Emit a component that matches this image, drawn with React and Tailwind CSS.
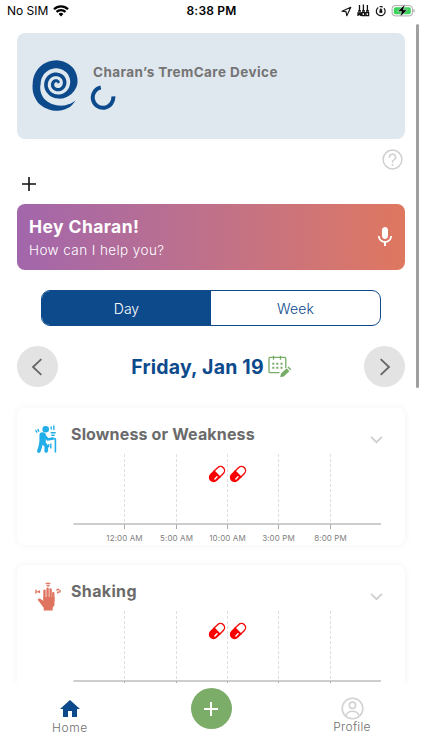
import { MdMic, MdHome } from 'react-icons/md'

// ── Data ────────────────────────────────────────────────────────

const TICKS = [
  { x: 107.5, label: '12:00 AM' },
  { x: 159.5, label: '5:00 AM' },
  { x: 210.5, label: '10:00 AM' },
  { x: 261.5, label: '3:00 PM' },
  { x: 313.5, label: '8:00 PM' },
]

// angle (deg), radius and band width of the logo spiral, tail first
const SPIRAL = [
  [41, 75, 0], [60, 75, 9], [90, 72, 17], [135, 68, 22], [180, 60, 24], [225, 60, 24],
  [270, 59, 24], [315, 57, 24], [360, 51, 22], [405, 43, 15], [450, 37, 12], [495, 34, 11],
  [540, 32, 11], [585, 30.5, 11], [630, 29, 11], [675, 27, 11], [720, 23.5, 11], [765, 20, 10],
  [810, 16.5, 10], [855, 14, 10], [900, 12, 10], [945, 11, 9.5], [990, 10, 9], [1035, 8, 8],
  [1060, 6, 7],
]

function spiralPath() {
  const outer = []
  const inner = []
  for (let i = 0; i < SPIRAL.length - 1; i++) {
    const [a0, r0, w0] = SPIRAL[i]
    const [a1, r1, w1] = SPIRAL[i + 1]
    for (let s = 0; s < 8; s++) {
      const t = s / 8
      const a = ((a0 + (a1 - a0) * t) * Math.PI) / 180
      const r = r0 + (r1 - r0) * t
      const w = (w0 + (w1 - w0) * t) / 2
      outer.push(`${(140 + Math.cos(a) * (r + w)).toFixed(1)} ${(168 + Math.sin(a) * (r + w)).toFixed(1)}`)
      inner.unshift(`${(140 + Math.cos(a) * (r - w)).toFixed(1)} ${(168 + Math.sin(a) * (r - w)).toFixed(1)}`)
    }
  }
  return `M${[...outer, ...inner].join('L')}Z`
}

// ── Icons ───────────────────────────────────────────────────────

function SpiralLogo() {
  return (
    <svg className="w-[46px] h-[52px] shrink-0" viewBox="67 96 136 156">
      <path d={spiralPath()} fill="#0d4a8c" />
    </svg>
  )
}

function WifiIcon() {
  return (
    <svg className="w-[16px] h-[12px]" viewBox="0 0 16 12" fill="none" stroke="#000" strokeWidth="2.2">
      <path d="M1 4.2a10 10 0 0 1 14 0M3.5 6.9a6.4 6.4 0 0 1 9 0" />
      <path d="M5.6 9a3.5 3.5 0 0 1 4.8 0L8 11.5z" fill="#000" stroke="none" />
    </svg>
  )
}

function StatusIcons() {
  return (
    <svg className="w-[76px] h-[16px]" viewBox="340 3 76 16" fill="none" stroke="#111">
      <path d="M342 11.2l8.8-4-4 8.6-.8-4.2z" strokeWidth="1.1" strokeLinejoin="round" />
      <path d="M359.5 5v6M363.4 4.5v6.5M367.4 5v6" strokeWidth="1.3" />
      <path d="M358 11h3M362 11h3M366 11h3M358 16v-3h2.8v3M358 14.5h2.8M362 12.7h2.6v3h-2.6zM366 12.7h2.6v3H366z" strokeWidth="1.3" />
      <path d="M378.3 7.6a4.4 4.4 0 1 0 5.6.6M379.6 6.8a4.4 4.4 0 0 1 3.2.2" strokeWidth="1.2" />
      <path d="M379.8 10.6h2.2v2h-2.2zM380.1 10.2v-.6a.8.8 0 0 1 1.6 0v.6" strokeWidth=".8" fill="#111" />
      <rect x="392.1" y="5.6" width="20.3" height="10.3" rx="3" stroke="#aaa" />
      <rect x="393.8" y="7.2" width="17" height="7.1" rx="1.7" fill="#3bd35b" stroke="none" />
      <path d="M414 9.2v3" stroke="#aaa" strokeWidth="1.2" />
      <path d="M405 4.2l-7.4 7.2h4l-1.6 5.6 7.4-7.2h-4z" fill="#000" stroke="#fff" strokeWidth=".5" />
    </svg>
  )
}

function HelpIcon() {
  return (
    <svg className="w-[21px] h-[21px]" viewBox="0 0 21 21" fill="none" stroke="#d0d0d0" strokeWidth="1.5">
      <circle cx="10.5" cy="10.5" r="9.4" />
      <path d="M7.4 8.3a3.1 3.1 0 1 1 4.6 2.6c-1 .6-1.5 1.1-1.5 2.3" strokeLinecap="round" />
      <circle cx="10.5" cy="15.9" r="1" fill="#d0d0d0" stroke="none" />
    </svg>
  )
}

function CalendarIcon() {
  return (
    <svg className="w-[25px] h-[24px]" viewBox="267 355 25 24" fill="none" stroke="#78ad68" strokeWidth="1.3">
      <path d="M285.8 368v-9.6a1 1 0 0 0-1-1H270a1 1 0 0 0-1 1v13.3a1 1 0 0 0 1 1h9.5M273.5 355.7v4M280.5 355.7v4" />
      <path d="M272.3 363.7h2M276.3 363.7h2M280.5 363.7h2M272.3 367.8h2M276.3 367.8h2M280.5 367.8h2" strokeWidth="2" />
      <path d="M280.2 377.2l.8-3.8 5.6-5.1 2.8 2.9-5.7 5.3zM287.5 367.4l1-1 2.8 2.9-1 1z" fill="#78ad68" stroke="none" />
    </svg>
  )
}

function WalkerIcon() {
  return (
    <svg className="w-[24px] h-[29px]" viewBox="35 425 24 29" fill="none" stroke="#22aee8" strokeLinecap="round" strokeLinejoin="round">
      <circle cx="46.7" cy="429.2" r="3.3" fill="#22aee8" stroke="none" />
      <path d="M43.6 435.4v5.2" strokeWidth="6.4" />
      <path d="M45.5 435.5l3.1 3.9 5-1" strokeWidth="2.6" />
      <path d="M42.2 442l-1 5-1.3 4M44 442l3.4 4.1-.2 4.9" strokeWidth="3.7" />
      <path d="M52.8 438.7h2.8a.8.8 0 0 1 .8.8v13" strokeWidth="1.6" strokeLinecap="butt" />
      <path d="M36.8 430.5l1 1.6M39 429.5l.7 1.8M52.2 427v2M54.8 426v3.6M52.2 432.8h4M52.8 435.3h2.4M49.7 444.8v2M51.8 444v4" strokeWidth="1.4" />
    </svg>
  )
}

function HandIcon() {
  return (
    <svg className="w-[28px] h-[29px]" viewBox="33 581 28 29" fill="none" stroke="#df7560" strokeLinecap="round">
      <path d="M43.5 598v-8.2M46.6 597v-9.4M49.6 597v-8.6M52.3 599v-6.8" strokeWidth="2.4" />
      <path d="M42.4 596h11.1v6.8c0 1.8-.8 2.8-1.8 4v2.7h-9v-2.7c-1.5-1.4-3.4-5.2-5.2-6.8-1.5-1.3 0-3.1 1.7-2.2l3.2 2z" fill="#df7560" stroke="none" />
      <path d="M35 589.3v2.6M38.4 590v1.6M36.8 590.7h1M45.3 582.5h3.4M46.2 584.7h1.8M55.9 589l1.8-.8M56.6 591.8l.8-.8M59.2 589.6l-.5 1.4" strokeWidth="1.5" />
    </svg>
  )
}

function Pill() {
  return (
    <svg className="w-[18px] h-[18px]" viewBox="0 0 18 18">
      <g transform="rotate(45 9 9)">
        <path d="M4.9 9V4.1a4.1 4.1 0 0 1 8.2 0V9z" fill="#fff" stroke="#f30d0d" strokeWidth="1.4" />
        <path d="M4.2 8.7h9.6v5.1a4.8 4.8 0 0 1-9.6 0z" fill="#fb0000" />
        <path d="M11 11v3" stroke="#fff" strokeWidth="1.5" strokeLinecap="round" />
      </g>
    </svg>
  )
}

function ProfileIcon() {
  return (
    <svg className="w-[23px] h-[23px]" viewBox="0 0 23 23" fill="none" stroke="#d2d2d2" strokeWidth="1.6">
      <circle cx="11.5" cy="11.5" r="10.3" />
      <circle cx="11.5" cy="8.3" r="3.2" />
      <path d="M4.8 19.2c.8-3.3 3.4-5 6.7-5s5.9 1.7 6.7 5" />
    </svg>
  )
}

function Chevron({ dir, size, color, width }) {
  const d = { left: 'M16 2.5L6 12l10 9.5', right: 'M8 2.5L18 12 8 21.5', down: 'M2 7l10 10L22 7' }[dir]
  return (
    <svg width={size} height={size} viewBox="0 0 24 24" fill="none" stroke={color} strokeWidth={width}>
      <path d={d} />
    </svg>
  )
}

// ── Symptom card ────────────────────────────────────────────────

function SymptomCard({ title, icon, titleClass, showLabels }) {
  return (
    <div className="h-[137px] shrink-0 rounded-lg bg-white shadow-[0_0_8px_rgba(0,0,0,0.05)] overflow-hidden">
      <div className="flex h-[46px] pl-[17px] pr-[22px]">
        <div className="w-[37px] pt-[17px]">{icon}</div>
        <h2 className={`flex-1 pt-[15px] text-[16px] leading-[22px] font-bold text-[#6b6b6b] ${titleClass}`}>{title}</h2>
        <div className="pt-[25px]">
          <Chevron dir="down" size={13} color="#cfcfcf" width={3.2} />
        </div>
      </div>
      <div className="grid">
        <svg className="col-start-1 row-start-1 w-[388px] h-[91px]" viewBox="0 0 388 91">
          {TICKS.map((t) => (
            <g key={t.label}>
              <line x1={t.x} x2={t.x} y1="0" y2="69" stroke="#dedede" strokeDasharray="3 2" />
              <line x1={t.x} x2={t.x} y1="70" y2="75" stroke="#aaa" />
              {showLabels && (
                <text x={t.x} y="86.5" textAnchor="middle" fontSize="8" fill="#808080" letterSpacing="0.1">{t.label}</text>
              )}
            </g>
          ))}
          <line x1="56.5" x2="364" y1="70" y2="70" stroke="#bdbdbd" strokeWidth="1.5" />
        </svg>
        <div className="col-start-1 row-start-1 flex gap-[2.5px] pl-[191px] pt-[11px]">
          <Pill />
          <Pill />
        </div>
      </div>
    </div>
  )
}

// ── Main component ──────────────────────────────────────────────

export default function App() {
  return (
    <div className="relative flex h-[750px] w-[422px] flex-col overflow-hidden bg-white font-['Inter',sans-serif]">
      {/* Status bar */}
      <div className="flex h-[22px] shrink-0 items-center justify-between pl-[7px] pr-[6px] text-[12px] text-black">
        <div className="flex w-[140px] items-center gap-[5px]">
          <span>No SIM</span>
          <WifiIcon />
        </div>
        <span className="font-semibold tracking-[0.2px]">8:38 PM</span>
        <div className="flex w-[140px] justify-end">
          <StatusIcons />
        </div>
      </div>

      <main className="flex flex-1 flex-col overflow-hidden px-[17px] pt-[11px]">
        {/* Device */}
        <div className="flex h-[106px] w-[388px] shrink-0 rounded-lg bg-[#e0e8ef] pl-[15px]">
          <div className="pt-[27px]">
            <SpiralLogo />
          </div>
          <div className="pl-[15px] pt-[30px]">
            <p className="text-[13.5px] leading-[18px] font-bold tracking-[0.42px] text-[#747474] whitespace-nowrap">Charan’s TremCare Device</p>
            <svg className="ml-[-3px] mt-[3px] size-[26px]" viewBox="0 0 26 26" fill="none" stroke="#0d4a8c" strokeWidth="4">
              <path d="M10.8 3.4A10.3 10.3 0 1 0 23.3 12.4" />
            </svg>
          </div>
        </div>

        <div className="flex h-[31px] w-[388px] shrink-0 justify-end pt-[10px] pr-[2px]">
          <HelpIcon />
        </div>
        <div className="h-[34px] shrink-0 pl-[5px] pt-[7px]">
          <svg className="size-[14px]" viewBox="0 0 14 14" stroke="#111" strokeWidth="1.6">
            <path d="M7 0v14M0 7h14" />
          </svg>
        </div>

        {/* Assistant */}
        <div className="flex h-[66px] w-[388px] shrink-0 items-center justify-between rounded-lg bg-linear-to-r from-[#a266ab] to-[#df775f] pl-[12px] pr-[8px] text-white">
          <div className="pt-[2px]">
            <p className="text-[17.5px] leading-[23px] font-bold tracking-[0.42px]">Hey Charan!</p>
            <p className="mt-[1px] text-[13.5px] leading-[23px] font-light tracking-[0.42px]">How can I help you?</p>
          </div>
          <MdMic size={24} />
        </div>

        {/* Day / Week */}
        <div className="ml-[24px] mt-[20px] flex h-[36px] w-[340px] shrink-0 overflow-hidden rounded-[9px] border border-[#0d4a8c] text-[14px] font-light">
          <button className="w-1/2 bg-[#0d4a8c] text-white">Day</button>
          <button className="w-1/2 text-[#0d4a8c] tracking-[0.2px]">Week</button>
        </div>

        {/* Date */}
        <div className="mt-[20px] flex h-[41px] w-[388px] shrink-0 items-center justify-between">
          <button className="flex size-[41px] items-center justify-center rounded-full bg-[#e3e3e3]">
            <Chevron dir="left" size={20} color="#666" width={2.2} />
          </button>
          <div className="flex items-center gap-[3px] pl-px pt-px">
            <span className="pt-px text-[19.5px] font-bold tracking-[0.2px] text-[#0d4a8c]">Friday, Jan 19</span>
            <CalendarIcon />
          </div>
          <button className="flex size-[41px] items-center justify-center rounded-full bg-[#e3e3e3]">
            <Chevron dir="right" size={20} color="#666" width={2.2} />
          </button>
        </div>

        {/* Symptoms */}
        <div className="-mx-[17px] mt-[21px] flex flex-1 flex-col gap-[20px] px-[17px]">
          <SymptomCard title="Slowness or Weakness" icon={<WalkerIcon />} titleClass="tracking-[0.15px]" showLabels />
          <SymptomCard title="Shaking" icon={<HandIcon />} titleClass="tracking-[0.35px]" />
        </div>
      </main>

      {/* Tab bar */}
      <nav className="relative flex h-[67px] shrink-0 bg-white text-[12px] text-[#707070]">
        <div className="flex w-[140px] flex-col items-center pt-[14px]">
          <MdHome size={24} color="#0d4a8c" />
          <span className="leading-[14px] font-light tracking-[0.6px]">Home</span>
        </div>
        <div className="flex w-[142px] justify-center pt-[5px]">
          <button className="flex size-[41px] items-center justify-center rounded-full bg-[#7bad69]">
            <svg className="size-[14px]" viewBox="0 0 14 14" stroke="#fff" strokeWidth="2">
              <path d="M7 0v14M0 7h14" />
            </svg>
          </button>
        </div>
        <div className="flex w-[140px] flex-col items-center pt-[14px]">
          <ProfileIcon />
          <span className="leading-[14px] font-light tracking-[0.3px]">Profile</span>
        </div>
      </nav>

      {/* Scroll indicator */}
      <div className="absolute left-[416px] top-[24px] h-[364px] w-[3px] rounded-full bg-[#a0a0a0]" />
    </div>
  )
}
